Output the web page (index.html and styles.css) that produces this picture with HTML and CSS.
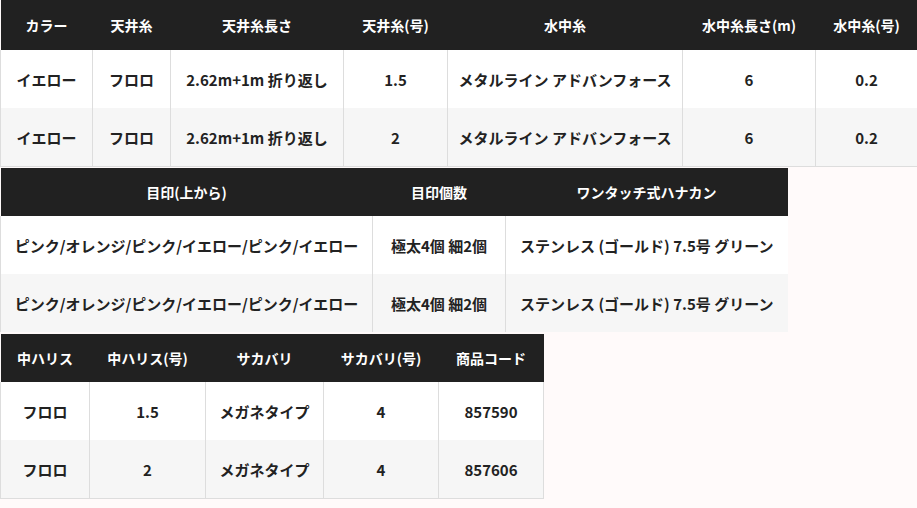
FILE: index.html
```html
<!DOCTYPE html>
<html lang="ja">
<head>
<meta charset="utf-8">
<link rel="stylesheet" href="styles.css">
</head>
<body>
<table class="spec spec-1">
  <colgroup>
    <col class="c92"><col class="c78"><col class="c173"><col class="c104"><col class="c235"><col class="c133"><col class="c102">
  </colgroup>
  <thead>
    <tr class="head first"><th>カラー</th><th>天井糸</th><th>天井糸長さ</th><th>天井糸(号)</th><th>水中糸</th><th>水中糸長さ(m)</th><th>水中糸(号)</th></tr>
  </thead>
  <tbody>
    <tr><td>イエロー</td><td>フロロ</td><td>2.62m+1m 折り返し</td><td>1.5</td><td>メタルライン アドバンフォース</td><td>6</td><td>0.2</td></tr>
    <tr><td>イエロー</td><td>フロロ</td><td>2.62m+1m 折り返し</td><td>2</td><td>メタルライン アドバンフォース</td><td>6</td><td>0.2</td></tr>
  </tbody>
</table>
<table class="spec spec-2">
  <colgroup>
    <col class="c372"><col class="c133"><col class="c282">
  </colgroup>
  <thead>
    <tr class="head"><th>目印(上から)</th><th>目印個数</th><th>ワンタッチ式ハナカン</th></tr>
  </thead>
  <tbody>
    <tr><td>ピンク/オレンジ/ピンク/イエロー/ピンク/イエロー</td><td>極太4個 細2個</td><td>ステンレス (ゴールド) 7.5号 グリーン</td></tr>
    <tr><td>ピンク/オレンジ/ピンク/イエロー/ピンク/イエロー</td><td>極太4個 細2個</td><td>ステンレス (ゴールド) 7.5号 グリーン</td></tr>
  </tbody>
</table>
<table class="spec spec-3">
  <colgroup>
    <col class="c89"><col class="c116"><col class="c118"><col class="c115"><col class="c105">
  </colgroup>
  <thead>
    <tr class="head"><th>中ハリス</th><th>中ハリス(号)</th><th>サカバリ</th><th>サカバリ(号)</th><th>商品コード</th></tr>
  </thead>
  <tbody>
    <tr><td>フロロ</td><td>1.5</td><td>メガネタイプ</td><td>4</td><td>857590</td></tr>
    <tr><td>フロロ</td><td>2</td><td>メガネタイプ</td><td>4</td><td>857606</td></tr>
  </tbody>
</table>
</body>
</html>
```
FILE: styles.css
```css
html, body {
  margin: 0;
  padding: 0;
  background: #fffafa;
}
body {
  font-family: "Noto Sans CJK JP", "Noto Sans", sans-serif;
  font-weight: 700;
  color: #222;
}
.spec {
  border-collapse: collapse;
  table-layout: fixed;
  margin: 0;
}
.spec-1 { width: 917px; }
.spec-2 { width: 787px; margin-top: 1px; }
.spec-3 { width: 543px; margin-top: 2px; }

.c92 { width: 92px; }
.c78 { width: 78px; }
.c173 { width: 173px; }
.c104 { width: 104px; }
.c235 { width: 235px; }
.c133 { width: 133px; }
.c102 { width: 102px; }
.c372 { width: 372px; }
.c282 { width: 282px; }
.c89 { width: 89px; }
.c116 { width: 116px; }
.c118 { width: 118px; }
.c115 { width: 115px; }
.c105 { width: 105px; }

.spec th {
  background: #212121;
  color: #fff;
  font-size: 14px;
  font-weight: 700;
  height: 48px;
  padding: 0 8px;
  text-align: center;
  white-space: nowrap;
  border: none;
}
.spec .head.first th {
  height: 50px;
}
.spec td {
  font-size: 15px;
  height: 58px;
  padding: 0 8px;
  text-align: center;
  white-space: nowrap;
  background: #fff;
  border-left: 1px solid #ddd;
  border-right: 1px solid #ddd;
}
.spec tbody tr:nth-child(even) td {
  background: #f6f6f6;
}
.spec tbody tr:last-child td {
  border-bottom: 1px solid #ddd;
}
.spec-2 td:last-child {
  border-right: none;
}
.spec-2 tbody tr:last-child td {
  border-bottom: none;
}
```
